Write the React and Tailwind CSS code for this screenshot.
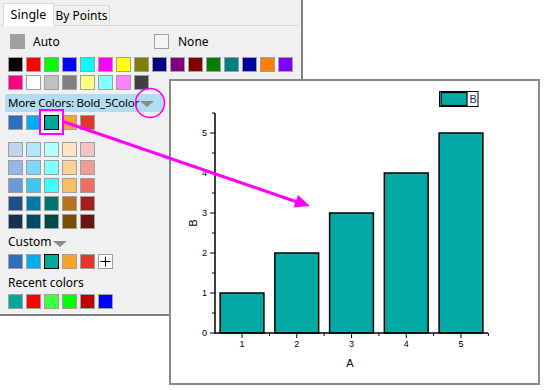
import React from 'react';

const row1 = ['#000000', '#ff0000', '#00ff00', '#0000ff', '#00ffff', '#ff00ff', '#ffff00', '#808000', '#000080', '#800080', '#800000', '#008000', '#008080', '#0000a0', '#ff8000', '#8000ff'];
const row2 = ['#ff0080', '#ffffff', '#c0c0c0', '#808080', '#ffff80', '#80ffff', '#ff80ff', '#404040'];
const bold = ['#2d6fba', '#00aeef', '#00a79d', '#f4a42c', '#e2382c'];
const grid = [
  ['#c0d4ee', '#b2e6fc', '#b2fffd', '#fde4c4', '#f6c3c0'],
  ['#96b7e3', '#80d6fa', '#80fffb', '#fad295', '#f09c95'],
  ['#6c9ad7', '#40c4f4', '#40fff8', '#f8bf60', '#ec6e65'],
  ['#224d87', '#0078a8', '#00746e', '#b5731f', '#a21f1b'],
  ['#16304f', '#004a69', '#004a45', '#7a4d06', '#6b1413'],
];
const recent = ['#00a79d', '#ff0000', '#40ff40', '#00ff00', '#c00000', '#0000ff'];

const Swatch = ({ color, selected }) => (
  <div
    className={`w-[15px] h-[15px] border ${selected ? 'border-black' : 'border-[#a0a0a0]'}`}
    style={{ backgroundColor: color }}
  />
);

const Row = ({ colors, className = '', children }) => (
  <div className={`flex gap-[3px] pl-[8px] ${className}`}>
    {colors.map((c, i) => (
      <Swatch key={i} color={c} selected={colors === bold && i === 2} />
    ))}
    {children}
  </div>
);

const Tri = () => (
  <svg width="14" height="6" viewBox="0 0 14 6">
    <polygon points="0,0 14,0 7,6" fill="#8a8a8a" />
  </svg>
);

const bars = [1, 2, 3, 4, 5];
const xOf = (v) => 242 + (v - 1) * 54.75;
const yOf = (v) => 333 - v * 40;

const Chart = () => (
  <svg width="367" height="302" viewBox="171 81 367 302" className="block">
    {bars.map((v) => (
      <rect key={v} x={xOf(v) - 21.9} y={yOf(v)} width="43.8" height={v * 40} fill="#00a9a4" stroke="#000" strokeWidth="1.5" />
    ))}
    {/* axes */}
    <line x1="215" y1="113" x2="215" y2="333.5" stroke="#000" strokeWidth="1.5" />
    <line x1="214.5" y1="333" x2="488" y2="333" stroke="#000" strokeWidth="1.5" />
    {[0, 1, 2, 3, 4, 5].map((v) => (
      <g key={v}>
        <line x1="210" y1={yOf(v)} x2="215" y2={yOf(v)} stroke="#000" strokeWidth="1" />
        <text x="207" y={yOf(v) + 3} textAnchor="end" fontSize="9" fontFamily="Liberation Sans, Arial, sans-serif" fill="#000">{v}</text>
      </g>
    ))}
    {[0.5, 1.5, 2.5, 3.5, 4.5, 5.5].map((v) => (
      <line key={v} x1="212" y1={yOf(v)} x2="215" y2={yOf(v)} stroke="#000" strokeWidth="1" />
    ))}
    {bars.map((v) => (
      <g key={v}>
        <line x1={xOf(v)} y1="333" x2={xOf(v)} y2="338" stroke="#000" strokeWidth="1" />
        <text x={xOf(v)} y="347" textAnchor="middle" fontSize="9" fontFamily="Liberation Sans, Arial, sans-serif" fill="#000">{v}</text>
      </g>
    ))}
    {[1.5, 2.5, 3.5, 4.5, 5.5].map((v) => (
      <line key={v} x1={xOf(v)} y1="333" x2={xOf(v)} y2="336" stroke="#000" strokeWidth="1" />
    ))}
    <text x="350" y="367" textAnchor="middle" fontSize="11" fontFamily="Liberation Sans, Arial, sans-serif" fill="#000">A</text>
    <text x="197" y="223" textAnchor="middle" fontSize="11" fontFamily="Liberation Sans, Arial, sans-serif" fill="#000" transform="rotate(-90 197 223)">B</text>
    {/* legend */}
    <rect x="439.5" y="91.5" width="38.5" height="15" fill="#fff" stroke="#000" strokeWidth="1" />
    <rect x="441" y="92.5" width="26" height="13" fill="#00a9a4" stroke="#000" strokeWidth="1.2" />
    <text x="469.5" y="103" fontSize="11" fontFamily="Liberation Sans, Arial, sans-serif" fill="#1a1a6e">B</text>
  </svg>
);

export default function App() {
  return (
    <div className="relative w-[548px] h-[390px] bg-white overflow-hidden font-['Noto_Sans','Open_Sans',sans-serif] text-[12px] text-black">
      {/* colour chooser panel */}
      <div className="w-[303px] h-[316px] bg-[#f0f0f0] border-r-2 border-b-2 border-[#7f7f7f]">
        <div className="flex items-end h-[26px] pl-[3px] mr-[2px] border-b border-[#d9d9d9]">
          <div className="relative z-10 -mb-px h-[23px] w-[51px] bg-white border border-b-0 border-[#d9d9d9] flex items-center justify-center leading-none text-[12.5px]">
            Single
          </div>
          <div className="h-[20px] w-[56px] border border-b-0 border-l-0 border-[#d9d9d9] flex items-center justify-center leading-none whitespace-nowrap">
            By Points
          </div>
        </div>

        <div className="flex items-center h-[15px] mt-[8px]">
          <div className="flex items-center w-[154px] pl-[10px]">
            <div className="w-[15px] h-[15px] bg-[#a0a0a0]" />
            <span className="ml-[8px] leading-none">Auto</span>
          </div>
          <div className="w-[15px] h-[15px] border border-[#a0a0a0] bg-[#f4f4f4]" />
          <span className="ml-[9px] leading-none">None</span>
        </div>

        <Row colors={row1} className="mt-[8px]" />
        <Row colors={row2} className="mt-[3px]" />

        <div className="mt-[4px] ml-[5px] w-[158px] h-[18px] bg-[#b2dcef] flex items-center pl-[3px] leading-none whitespace-nowrap">
          <span className="text-[11.5px] tracking-[-0.25px]">More Colors: Bold_5Color</span>
          <span className="ml-[1px] mt-[2px]"><Tri /></span>
        </div>

        <Row colors={bold} className="mt-[3px]" />

        <div className="mt-[12px] flex flex-col gap-[3px]">
          {grid.map((r, i) => (
            <Row key={i} colors={r} />
          ))}
        </div>

        <div className="mt-[5px] h-[16px] pl-[8px] flex items-center leading-none">
          <span>Custom</span>
          <span className="ml-[1px] mt-[4px]"><Tri /></span>
        </div>
        <Row colors={bold} className="mt-[4px]">
          <div className="w-[15px] h-[15px] bg-white border border-[#a0a0a0] flex items-center justify-center">
            <svg width="11" height="11" viewBox="0 0 11 11">
              <path d="M5.5 0.5v10M0.5 5.5h10" stroke="#000" strokeWidth="1" />
            </svg>
          </div>
        </Row>

        <div className="mt-[6px] h-[16px] pl-[8px] flex items-center leading-none">Recent colors</div>
        <Row colors={recent} className="mt-[3px]" />
      </div>

      {/* graph window */}
      <div className="absolute left-[169px] top-[79px] w-[371px] h-[306px] bg-white border-2 border-[#8a8a8a]">
        <Chart />
      </div>

      {/* annotation overlay */}
      <svg className="absolute inset-0 pointer-events-none" width="548" height="390" viewBox="0 0 548 390">
        <circle cx="150" cy="103" r="14.5" fill="none" stroke="#ff00ff" strokeWidth="1.6" />
        <rect x="40" y="110" width="23" height="24" fill="none" stroke="#ff00ff" strokeWidth="2" />
        <line x1="63" y1="121.5" x2="297" y2="202" stroke="#ff00ff" strokeWidth="3" />
        <polygon points="310,206 293.5,207.5 298,195" fill="#ff00ff" />
      </svg>
    </div>
  );
}
